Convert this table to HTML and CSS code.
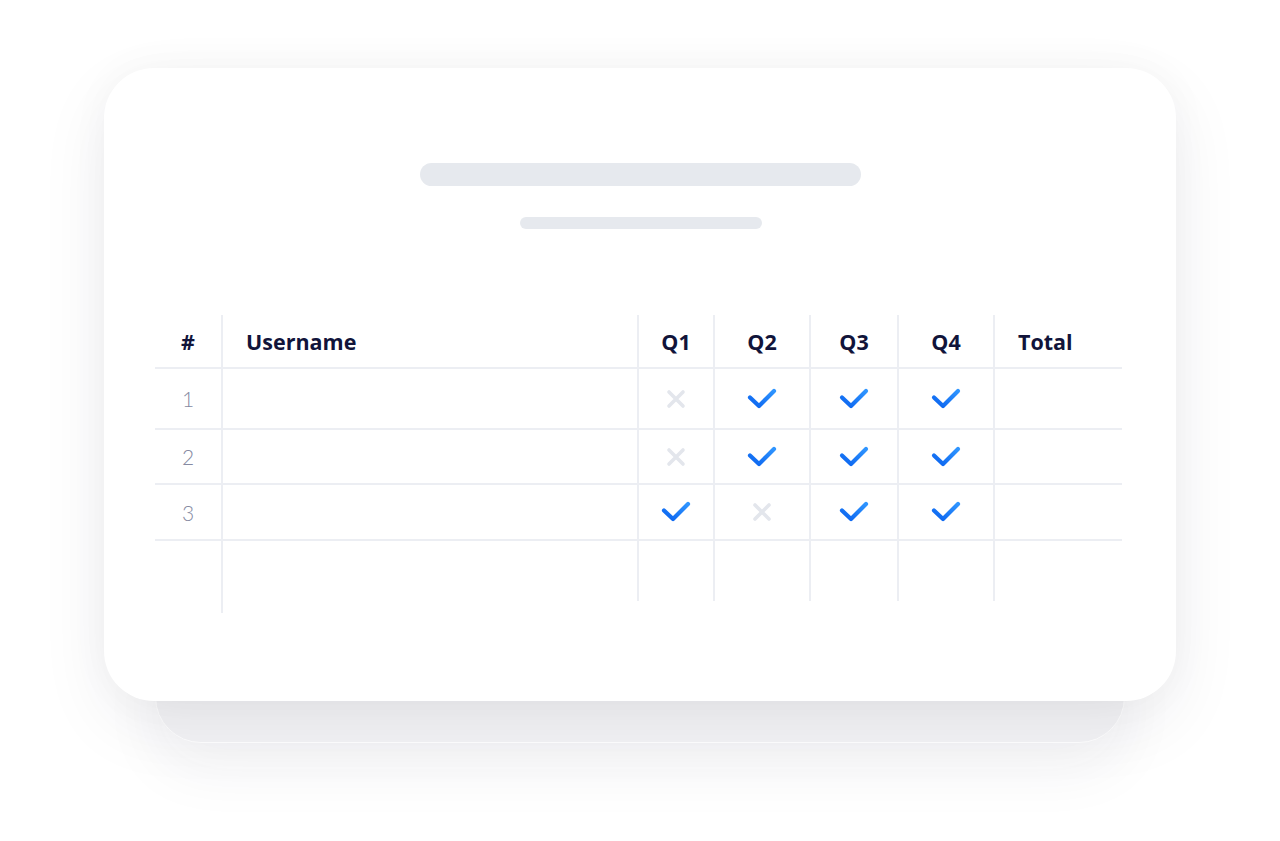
FILE: index.html
```html
<!DOCTYPE html>
<html lang="en">
<head>
<meta charset="utf-8">
<title>Quiz results</title>
<link rel="stylesheet" href="styles.css">
</head>
<body>
<svg width="0" height="0" class="defs" aria-hidden="true">
  <defs>
    <linearGradient id="chk" x1="0" y1="1" x2="1" y2="0">
      <stop offset="0" stop-color="#0a63ef"/>
      <stop offset="1" stop-color="#2f95ff"/>
    </linearGradient>
    <symbol id="ok" viewBox="0 0 30 22">
      <polyline points="3,9.5 12,18 27,3" fill="none" stroke="url(#chk)" stroke-width="4.2" stroke-linecap="round" stroke-linejoin="round"/>
    </symbol>
    <symbol id="no" viewBox="0 0 20 20">
      <path d="M3 3 L17 17 M17 3 L3 17" fill="none" stroke="#e3e6ec" stroke-width="3.6" stroke-linecap="round"/>
    </symbol>
  </defs>
</svg>
<main class="stage">
  <section class="card">
    <div class="skeleton">
      <div class="bar bar-lg"></div>
      <div class="bar bar-sm"></div>
    </div>
    <div class="table">
      <div class="cell head num">#</div>
      <div class="cell head name vl">Username</div>
      <div class="cell head q vl">Q1</div>
      <div class="cell head q vl">Q2</div>
      <div class="cell head q vl">Q3</div>
      <div class="cell head q vl">Q4</div>
      <div class="cell head name vl">Total</div>

      <div class="cell r1 num idx">1</div>
      <div class="cell r1 vl"></div>
      <div class="cell r1 q vl"><svg class="x"><use href="#no"/></svg></div>
      <div class="cell r1 q vl"><svg class="ck"><use href="#ok"/></svg></div>
      <div class="cell r1 q vl"><svg class="ck"><use href="#ok"/></svg></div>
      <div class="cell r1 q vl"><svg class="ck"><use href="#ok"/></svg></div>
      <div class="cell r1 vl"></div>

      <div class="cell r2 num idx">2</div>
      <div class="cell r2 vl"></div>
      <div class="cell r2 q vl"><svg class="x"><use href="#no"/></svg></div>
      <div class="cell r2 q vl"><svg class="ck"><use href="#ok"/></svg></div>
      <div class="cell r2 q vl"><svg class="ck"><use href="#ok"/></svg></div>
      <div class="cell r2 q vl"><svg class="ck"><use href="#ok"/></svg></div>
      <div class="cell r2 vl"></div>

      <div class="cell r3 num idx">3</div>
      <div class="cell r3 vl"></div>
      <div class="cell r3 q vl"><svg class="ck"><use href="#ok"/></svg></div>
      <div class="cell r3 q vl"><svg class="x"><use href="#no"/></svg></div>
      <div class="cell r3 q vl"><svg class="ck"><use href="#ok"/></svg></div>
      <div class="cell r3 q vl"><svg class="ck"><use href="#ok"/></svg></div>
      <div class="cell r3 vl"></div>

      <div class="cell last"></div>
      <div class="cell last long"></div>
      <div class="cell last short"></div>
      <div class="cell last short"></div>
      <div class="cell last short"></div>
      <div class="cell last short"></div>
      <div class="cell last short"></div>
    </div>
  </section>
  <div class="card-back"></div>
</main>
</body>
</html>
```
FILE: styles.css
```css
* { box-sizing: border-box; }
html, body {
  margin: 0;
  padding: 0;
  background: #ffffff;
  font-family: "Open Sans", "Lato", sans-serif;
}
.defs { position: absolute; width: 0; height: 0; }

.stage {
  width: 1280px;
  height: 841px;
  padding-top: 68px;
  display: flex;
  flex-direction: column;
  align-items: center;
  overflow: hidden;
}

.card {
  position: relative;
  z-index: 2;
  width: 1072px;
  height: 633px;
  background: #ffffff;
  border-radius: 50px;
  box-shadow: 0 24px 70px rgba(30, 35, 60, 0.07), 0 0 40px rgba(30, 35, 60, 0.035);
  padding: 95px 54px 0 51px;
  display: flex;
  flex-direction: column;
}

.card-back {
  position: relative;
  z-index: 1;
  width: 970px;
  height: 100px;
  margin-top: -58px;
  background: #f3f3f5;
  border: 1.5px solid #ffffff;
  border-radius: 0 0 46px 46px;
  box-shadow: 0 26px 60px rgba(30, 35, 60, 0.06);
}

.skeleton {
  display: flex;
  flex-direction: column;
  align-items: center;
  gap: 31px;
  padding-left: 4px;
}
.bar { background: #e6e9ee; border-radius: 12px; }
.bar-lg { width: 441px; height: 23px; }
.bar-sm { width: 242px; height: 12px; border-radius: 6px; }

.table {
  margin-top: 86px;
  display: grid;
  grid-template-columns: 66px 416px 76px 96px 88px 96px 129px;
  grid-template-rows: 54px 61px 55px 56px 72px;
}

.cell {
  display: flex;
  align-items: center;
  border-bottom: 2px solid #eceef3;
}
.vl { border-left: 2px solid #eceef3; }

.head {
  font-family: "Open Sans", sans-serif;
  font-weight: 700;
  font-size: 21.5px;
  color: #11143a;
  padding-top: 1px;
}
.num { justify-content: center; }
.name { padding-left: 23px; }
.q { justify-content: center; }

.idx {
  font-family: "Lato", sans-serif;
  font-weight: 300;
  font-size: 21px;
  color: #868aa2;
}

.ck { width: 30px; height: 22px; }
.x { width: 20px; height: 20px; }

.last {
  border-bottom: none;
  background-repeat: no-repeat;
  background-position: 0 0;
}
.last.long {
  background-image: linear-gradient(#eceef3, #eceef3);
  background-size: 2px 72px;
}
.last.short {
  background-image: linear-gradient(#eceef3, #eceef3);
  background-size: 2px 60px;
}
```
